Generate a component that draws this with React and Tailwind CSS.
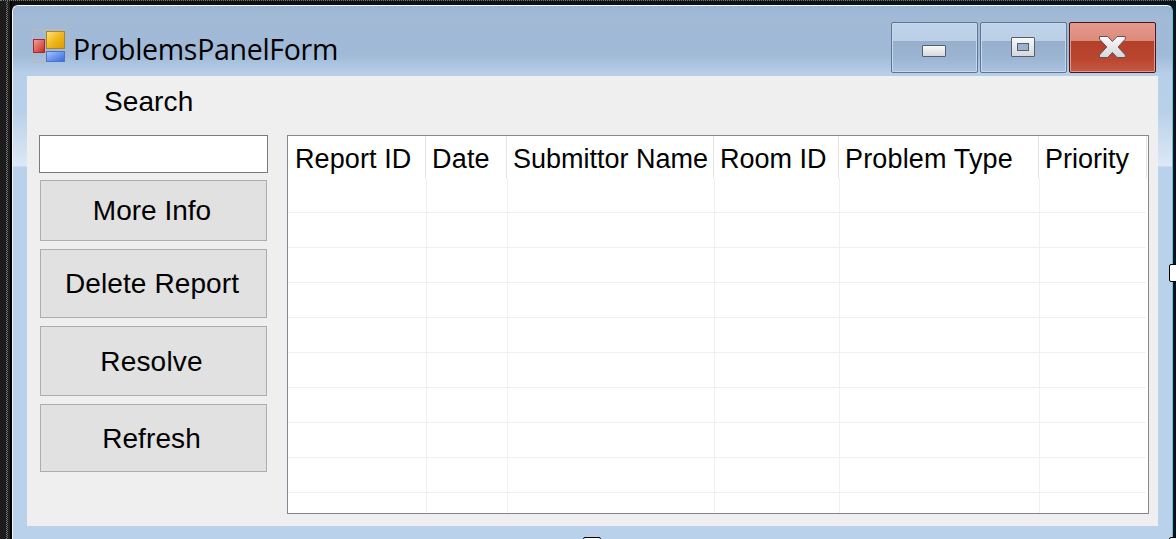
const columns = [
  { name: "Report ID", head: "w-[138px] pl-[7px] tracking-[0.1px]", cell: "w-[139px]" },
  { name: "Date", head: "w-[81px] pl-[6px] tracking-[0.2px]", cell: "w-[81px]" },
  { name: "Submittor Name", head: "w-[207px] pl-[6px]", cell: "w-[207px]" },
  { name: "Room ID", head: "w-[125px] pl-[6px]", cell: "w-[125px]" },
  { name: "Problem Type", head: "w-[200px] pl-[6px] tracking-[0.15px]", cell: "w-[200px]" },
  { name: "Priority", head: "w-[108px] pl-[6px]", cell: "" },
];

const actions = [
  { label: "More Info", box: "h-[61px] pr-[3px] tracking-[0px]" },
  { label: "Delete Report", box: "h-[69px] mt-2 pr-[3px] tracking-[0.1px]" },
  { label: "Resolve", box: "h-[70px] mt-2 pr-[4px] pt-[2px] tracking-[0.2px]" },
  { label: "Refresh", box: "h-[68px] mt-2 pr-[4px] pt-[2px] tracking-[0.1px]" },
];

function FormIcon() {
  return (
    <svg className="mt-[3px] h-[36px] w-[36px] shrink-0" viewBox="0 0 36 36">
      <defs>
        <linearGradient id="gold" x1="0" y1="0" x2="1" y2="1">
          <stop offset="0" stopColor="#ffe680" />
          <stop offset="0.5" stopColor="#f0b71c" />
          <stop offset="1" stopColor="#dc9a00" />
        </linearGradient>
        <linearGradient id="red" x1="0" y1="0" x2="1" y2="1">
          <stop offset="0" stopColor="#f5a59b" />
          <stop offset="1" stopColor="#c8251c" />
        </linearGradient>
        <linearGradient id="blue" x1="0" y1="0" x2="1" y2="1">
          <stop offset="0" stopColor="#a5c6ff" />
          <stop offset="1" stopColor="#3568dc" />
        </linearGradient>
      </defs>
      <path d="M1.5 11V2H34.5M1.5 25v9.5H14M14 2v9M14 25v9" fill="none" stroke="#b7bbc1" strokeWidth="1.5" />
      <rect x="2.5" y="11.5" width="11" height="13" fill="url(#red)" stroke="#a52a2a" />
      <rect x="15.5" y="3.5" width="18" height="17" fill="url(#gold)" stroke="#a8842a" />
      <rect x="15.5" y="23.5" width="18" height="10" fill="url(#blue)" stroke="#4c74bf" />
    </svg>
  );
}

function CaptionButton({ label, tone, children }) {
  return (
    <button aria-label={label} className={`flex h-[51px] w-[87px] items-center justify-center rounded-[2px] border ${tone}`}>
      {children}
    </button>
  );
}

const plain =
  "border-[#5f7692] bg-[linear-gradient(#bfd4ea_0,#bbd0e6_18px,#97afcd_18px,#9cb5d2_36px,#abc3de_100%)] shadow-[inset_0_0_0_1px_#c6d8eb]";
const danger =
  "border-[#4c1420] bg-[linear-gradient(#e39a8d_0,#dc8a7b_18px,#b5402a_18px,#ba4630_36px,#c55742_100%)] shadow-[inset_0_0_0_1px_#e09b8d]";

function Glyph({ children }) {
  return (
    <svg className="h-[49px] w-[85px]" viewBox="0 0 85 49">
      <defs>
        <linearGradient id="silver" x1="0" y1="0" x2="0" y2="1">
          <stop offset="0" stopColor="#fafafa" />
          <stop offset="1" stopColor="#d5d7da" />
        </linearGradient>
      </defs>
      {children}
    </svg>
  );
}

function TitleBar() {
  return (
    <header className="flex h-[70px] items-start pl-[18px] pr-[16px]">
      <div className="flex flex-1 pt-[19px]">
        <FormIcon />
        <h1 className="ml-[6px] whitespace-nowrap font-['Open_Sans',sans-serif] text-[28.5px] leading-[48px] tracking-[-0.3px] text-black">
          ProblemsPanelForm
        </h1>
      </div>
      <div className="flex gap-[2px] pt-[16px]">
        <CaptionButton label="Minimize" tone={plain}>
          <Glyph>
            <rect x="30.5" y="22.5" width="23" height="11" rx="0.5" fill="url(#silver)" stroke="#545e6e" />
          </Glyph>
        </CaptionButton>
        <CaptionButton label="Maximize" tone={plain}>
          <Glyph>
            <rect x="30.5" y="14.5" width="23" height="19" rx="0.5" fill="url(#silver)" stroke="#545e6e" />
            <rect x="36.5" y="20.5" width="11" height="7" fill="#9bb2ce" stroke="#545e6e" />
          </Glyph>
        </CaptionButton>
        <CaptionButton label="Close" tone={danger}>
          <Glyph>
            <path
              d="M29.5 13.5h8.2l4.7 5 4.7-5h8.2v2.6L48 24l7.3 7.9v2.6h-8.2l-4.7-5-4.7 5h-8.2v-2.6L36.8 24l-7.3-7.9Z"
              fill="url(#silver)"
              stroke="#665057"
            />
          </Glyph>
        </CaptionButton>
      </div>
    </header>
  );
}

function ReportList() {
  return (
    <section className="mt-[59px] flex h-[379px] w-[862px] flex-col border border-[#828790] bg-white">
      <div className="flex h-[42px]">
        {columns.map((c) => (
          <div key={c.name} className={`shrink-0 whitespace-nowrap border-r border-[#e5e5e5] text-[27px] leading-[46px] ${c.head}`}>
            {c.name}
          </div>
        ))}
      </div>
      <div className="flex flex-1 flex-col overflow-hidden pr-[2px]">
        {Array.from({ length: 10 }, (_, r) => (
          <div key={r} className={`flex h-[35px] shrink-0 ${r < 9 ? "border-b border-[#f0f0f0]" : ""}`}>
            {columns.slice(0, 5).map((c) => (
              <div key={c.name} className={`shrink-0 border-r border-[#f0f0f0] ${c.cell}`} />
            ))}
          </div>
        ))}
      </div>
    </section>
  );
}

export default function App() {
  return (
    <div className="relative h-[539px] w-[1176px] overflow-hidden bg-[#1c1c1c] font-['Liberation_Sans',Arial,sans-serif] text-black">
      <div className="flex h-full border-t border-dotted border-[#777]">
        <div className="w-[6px] shrink-0" />
        <div className="w-[2px] shrink-0 bg-[repeating-conic-gradient(#707070_0_25%,#202020_0_50%)] bg-[length:2px_2px]" />
        <div className="flex flex-1 bg-[linear-gradient(90deg,#202020,#202020_2px,#000_2px,#000_4px,#101010_4px,#06151b)] pl-1 pt-1">
          <div className="h-[560px] w-[1161px] overflow-hidden rounded-t-[6px] border border-b-0 border-[#f4f8fc] border-r-[#5fc3dc] bg-[linear-gradient(#9ab5d4_0,#a2bad6_12px,#9fb9d7_48px,#b7cfe8_68px,#b9d0e9_105px,#dbe8f5_158px,#dbe8f5_160px,#b9d1ea_161px)]">
            <TitleBar />
            <main className="ml-[14px] flex h-[450px] w-[1131px] bg-[#efefef]">
              <aside className="w-[260px] shrink-0 pl-[12px]">
                <label className="block h-[59px] pl-[65px] text-[28px] leading-[51px] tracking-[0.1px]" htmlFor="search">
                  Search
                </label>
                <input id="search" className="block h-[38px] w-[229px] border border-[#7a7a7a] bg-white" />
                <div className="ml-px mt-[7px] flex w-[227px] flex-col">
                  {actions.map((a) => (
                    <button key={a.label} className={`border border-[#adadad] bg-[#e1e1e1] text-[28px] ${a.box}`}>
                      {a.label}
                    </button>
                  ))}
                </div>
              </aside>
              <ReportList />
            </main>
          </div>
        </div>
      </div>
      <div className="absolute left-[1169px] top-[264px] h-[18px] w-[18px] rounded-[2px] border border-black bg-white" />
      <div className="absolute left-[583px] top-[537px] h-[18px] w-[18px] rounded-[2px] border border-black bg-white" />
      <div className="absolute left-[1169px] top-[537px] h-[18px] w-[18px] rounded-[2px] border border-black bg-white" />
    </div>
  );
}
